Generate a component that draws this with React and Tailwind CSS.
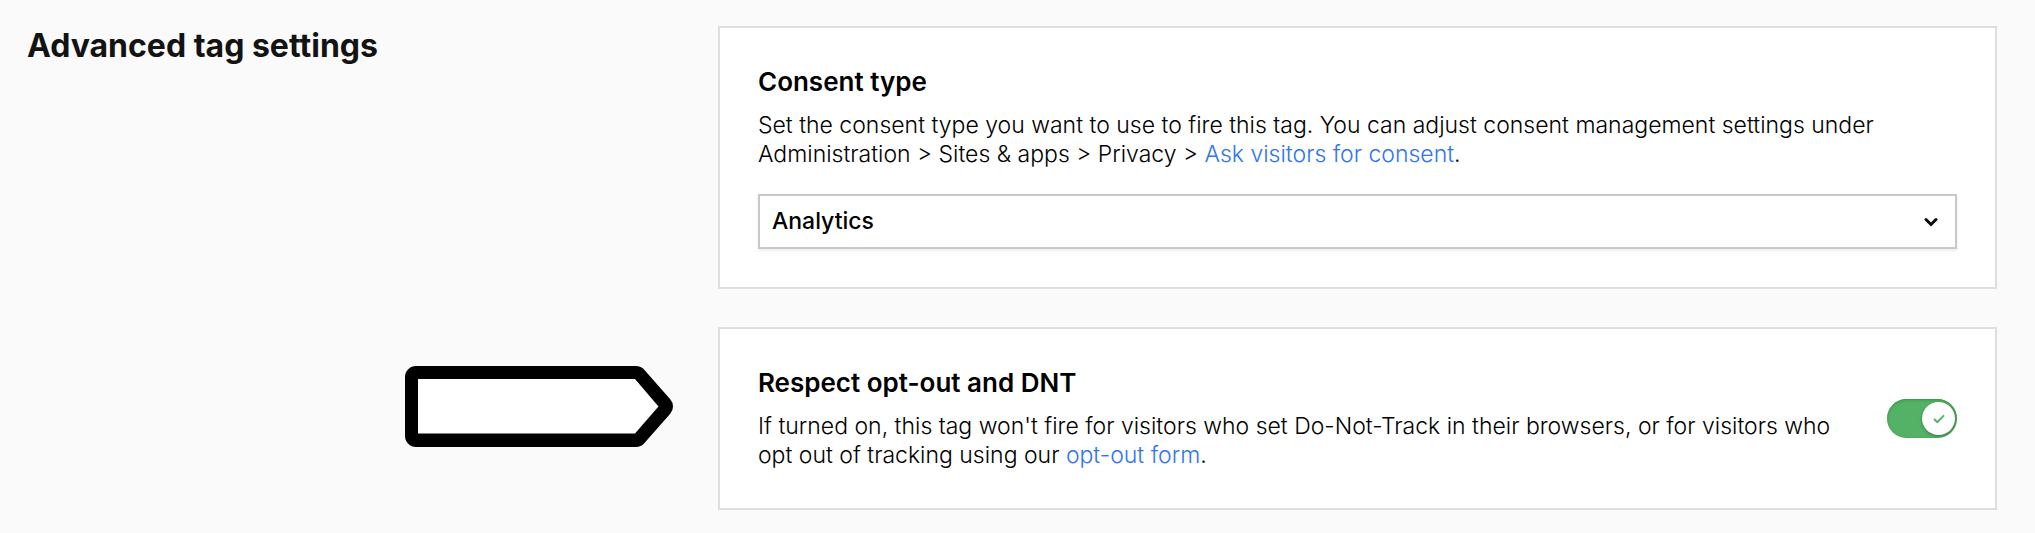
import { useState } from "react";

function Card({ children }) {
  return <section className="border-2 border-[#dedede] bg-white px-[38px]">{children}</section>;
}

function Toggle({ id, checked, onChange }) {
  return (
    <label htmlFor={id} className="relative block h-[39px] w-[70px] shrink-0 cursor-pointer">
      <input
        id={id}
        type="checkbox"
        role="switch"
        aria-label="Respect opt-out and DNT"
        checked={checked}
        onChange={onChange}
        className="peer block h-full w-full cursor-pointer appearance-none rounded-full bg-[#a3a3a3] shadow-[inset_0_1px_3px_#3c9142] checked:bg-[#53b265]"
      />
      {/* Knob */}
      <span className="pointer-events-none absolute top-[3px] left-[3px] flex size-[33px] items-center justify-center rounded-full bg-white shadow-[0_1px_3px_rgba(0,0,0,0.35)] peer-checked:left-[35px]">
        {checked && (
          <svg viewBox="0 0 12 10" className="h-[10px] w-[12px]" fill="none" stroke="#53b265" strokeWidth="2">
            <path d="M1 5 4.3 8.2 11 1.4" />
          </svg>
        )}
      </span>
    </label>
  );
}

export default function App() {
  const [consentType, setConsentType] = useState("analytics");
  const [respectDnt, setRespectDnt] = useState(true);

  return (
    <main className="grid min-h-screen grid-cols-[1fr_1.98fr] content-start gap-x-[45px] gap-y-[38px] bg-[#fafafa] pt-[26px] pr-[38px] pb-[23px] pl-[27px] font-[Inter,sans-serif] text-[23px] leading-[29px] font-light text-black">
      <h1 className="text-[32px] leading-[40px] font-bold text-[#131313]">Advanced tag settings</h1>

      {/* Consent type */}
      <Card>
        <h2 className="pt-[38px] text-[26px] leading-[32px] font-semibold">
          <label htmlFor="consent-type">Consent type</label>
        </h2>
        <p className="mt-[13px]">
          Set the consent type you want to use to fire this tag. You can adjust consent management settings under
          Administration &gt; Sites &amp; apps &gt; Privacy &gt;{" "}
          <a href="#consent" className="text-[#2f74f2]">Ask visitors for consent</a>.
        </p>
        <div className="relative mt-[25px] mb-[38px]">
          <select
            id="consent-type"
            value={consentType}
            onChange={(e) => setConsentType(e.target.value)}
            className="block h-[55px] w-full appearance-none border-2 border-[#c8c8c8] bg-white px-[12px] font-medium shadow-[0_2px_3px_rgba(0,0,0,0.08)]">
            <option value="analytics">Analytics</option>
            <option value="marketing">Marketing automation</option>
            <option value="remarketing">Remarketing</option>
          </select>
          <svg
            viewBox="0 0 14 10"
            className="pointer-events-none absolute inset-y-0 right-[19px] my-auto h-[10px] w-[14px]"
            fill="none"
            stroke="#0d0d0d"
            strokeWidth="3"
            strokeLinecap="round">
            <path d="M2 2.5 7 7.5 12 2.5" />
          </svg>
        </div>
      </Card>

      {/* Pointer arrow */}
      <div className="mt-[39px] flex justify-end">
        <svg viewBox="0 0 268 81" className="h-[81px] w-[268px]">
          <path d="M11 11H231L257 40.5 231 70H11Z" stroke="#000" strokeWidth="22" strokeLinejoin="round" />
          <path d="M13 13H230L253.5 40.5 230 67.5H13Z" fill="#fff" />
        </svg>
      </div>

      {/* Respect opt-out and DNT */}
      <Card>
        <div className="flex items-center gap-[54px] pt-[38px] pb-[38px]">
          <div className="flex-1">
            <h2 className="text-[26px] leading-[32px] font-semibold">Respect opt-out and DNT</h2>
            <p className="mt-[13px]">
              If turned on, this tag won't fire for visitors who set Do-Not-Track in their browsers, or for visitors who
              opt out of tracking using our{" "}
              <a href="#opt-out" className="text-[#2f74f2]">opt-out form</a>.
            </p>
          </div>
          <Toggle id="respect-dnt" checked={respectDnt} onChange={(e) => setRespectDnt(e.target.checked)} />
        </div>
      </Card>
    </main>
  );
}
